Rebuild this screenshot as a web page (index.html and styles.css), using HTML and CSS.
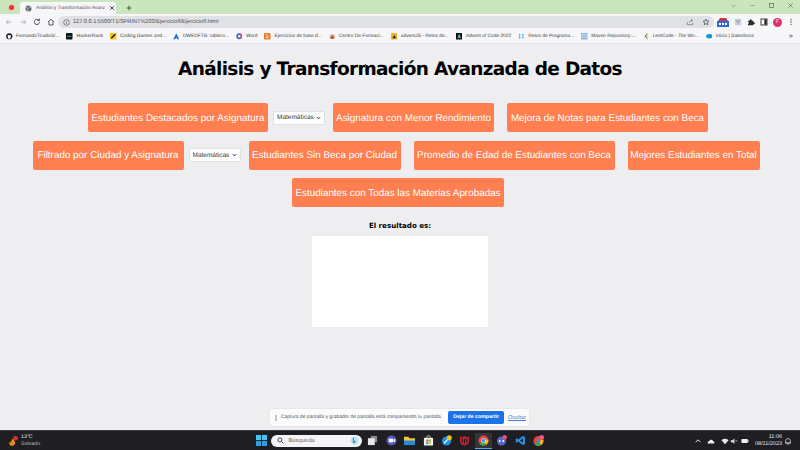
FILE: index.html
```html
<!DOCTYPE html>
<html lang="es">
<head>
<meta charset="utf-8">
<title>Análisis y Transformación Avanzada de Datos</title>
<link rel="stylesheet" href="styles.css">
</head>
<body>
<div class="browser">
  <header class="tabstrip">
    <span class="rec"></span>
    <div class="tab">
      <svg class="ic7" viewBox="0 0 16 16"><circle cx="8" cy="8" r="7" fill="#5f6368"/><path d="M2 6c3 0 4 1 5 3s-1 3-1 5M10 2c-1 2 0 3 2 3s2 3 3 3" fill="none" stroke="#fff" stroke-width="1.6"/></svg>
      <span class="tab-title">Análisis y Transformación Avanz</span>
      <svg class="tab-x" viewBox="0 0 10 10"><path d="M2 2l6 6M8 2l-6 6" stroke="#333" stroke-width="1.5"/></svg>
    </div>
    <svg class="tab-new" viewBox="0 0 10 10"><path d="M5 1v8M1 5h8" stroke="#3c5a3c" stroke-width="1.5"/></svg>
    <div class="win-controls">
      <svg viewBox="0 0 10 10"><path d="M2 4l3 3 3-3" fill="none" stroke="#7c8a78" stroke-width="1"/></svg>
      <svg viewBox="0 0 10 10"><path d="M2 5h6" stroke="#7c8a78" stroke-width="1"/></svg>
      <svg viewBox="0 0 10 10"><rect x="2" y="2" width="6" height="6" fill="none" stroke="#5d6b5a" stroke-width="1"/></svg>
      <svg viewBox="0 0 10 10"><path d="M2 2l6 6M8 2l-6 6" stroke="#5d6b5a" stroke-width="1"/></svg>
    </div>
  </header>

  <div class="toolbar">
    <div class="nav">
      <svg viewBox="0 0 12 12"><path d="M10 6H2M5.500 2.500L2 6l3.500 3.500" fill="none" stroke="#a8abb0" stroke-width="1.300"/></svg>
      <svg viewBox="0 0 12 12"><path d="M2 6h8M6.500 2.500L10 6 6.500 9.500" fill="none" stroke="#a8abb0" stroke-width="1.300"/></svg>
      <svg viewBox="0 0 12 12"><path d="M9.800 6.500A3.900 3.900 0 1 1 8.800 3.200M9.500 1v3h-3" fill="none" stroke="#3c4043" stroke-width="1.400"/></svg>
      <svg viewBox="0 0 12 12"><path d="M1.500 6L6 1.800 10.500 6M3 5.500v5h6v-5" fill="none" stroke="#3c4043" stroke-width="1.300"/></svg>
    </div>
    <div class="omnibox">
      <svg class="ic7" viewBox="0 0 12 12"><circle cx="6" cy="6" r="4.800" fill="none" stroke="#55585c" stroke-width="1.200"/><path d="M6 5.500v3M6 3.300v1" stroke="#55585c" stroke-width="1.200"/></svg>
      <span class="url">127.0.0.1:5500/T1/SPRINT%203/Ejercicio6/Ejercicio6.html</span>
      <svg class="ic8 omni-share" viewBox="0 0 12 12"><path d="M2 6v4h8V7M5 7c0-2 2-3.500 4-3.500M7.500 1.500l2.500 2-2.500 2" fill="none" stroke="#6a6d71" stroke-width="1"/></svg>
      <svg class="ic8" viewBox="0 0 12 12"><path d="M6 1.500l1.300 3 3.200.3-2.400 2.100.7 3.200L6 8.400l-2.800 1.700.7-3.200L1.500 4.800l3.200-.3z" fill="none" stroke="#45484c" stroke-width="1.100"/></svg>
    </div>
    <div class="ext">
      <svg class="ext-wide" viewBox="0 0 12 10"><rect x="0" y="4" width="12" height="6" fill="#2a6fd0"/><path d="M1 4l2-3h6l2 3" fill="#c8324a"/><rect x="2" y="6" width="2" height="2" fill="#fff"/><rect x="5" y="6" width="2" height="2" fill="#fff"/><rect x="8" y="6" width="2" height="2" fill="#fff"/></svg>
      <svg class="ic8" viewBox="0 0 10 10"><rect x="1" y="1" width="8" height="8" rx="1" fill="#c9cfe0"/><path d="M3 3l2 2 2-2M5 5v2" stroke="#7d82a8" fill="none"/></svg>
      <svg class="ic8" viewBox="0 0 12 12"><path d="M1.500 4h2.500c-.5-3 3.500-3 3 0h2.500v2.500c3-.5 3 3.500 0 3V11h-8V8.500c2 .5 2-3 0-2.500z" fill="#27292c"/></svg>
      <svg class="ic8" viewBox="0 0 12 12"><rect x="1.500" y="1.500" width="9" height="9" fill="#fff" stroke="#222" stroke-width="1.300"/><rect x="6.500" y="2" width="3.500" height="8" fill="#222"/></svg>
      <span class="avatar">F</span>
      <svg class="ic8" viewBox="0 0 12 12"><circle cx="6" cy="2.500" r="1" fill="#444"/><circle cx="6" cy="6" r="1" fill="#444"/><circle cx="6" cy="9.500" r="1" fill="#444"/></svg>
    </div>
  </div>

  <nav class="bookmarks">
    <a class="bm"><svg viewBox="0 0 10 10"><circle cx="5" cy="5" r="4.800" fill="#1b1f23"/><path d="M3.500 9V7.500C2 7 2.500 3.500 3 3.200L4 3.600h2l1-.4c.5.300 1 3.800-.5 4.300V9" fill="#fff"/></svg>FernandoTiradoG/...</a>
    <a class="bm"><svg viewBox="0 0 10 10"><rect width="10" height="10" rx="1" fill="#0e141e"/><rect x="2" y="4.500" width="6" height="1.500" fill="#2ec866"/></svg>HackerRank</a>
    <a class="bm"><svg viewBox="0 0 10 10"><rect width="10" height="10" fill="#f5c518"/><path d="M2 8l6-6" stroke="#111" stroke-width="2"/></svg>Coding Games and...</a>
    <a class="bm"><svg viewBox="0 0 10 10"><path d="M5 .5L9.500 9.500h-3L5 6.500 3.500 9.500H.5z" fill="#1f6fd6"/></svg>DWEDFTG: tablero...</a>
    <a class="bm"><svg viewBox="0 0 10 10"><circle cx="5" cy="5" r="4.500" fill="#4d55c8"/><circle cx="5" cy="5" r="2" fill="#fff"/><path d="M5 .5A4.500 4.500 0 0 1 9.500 5H7" fill="#e0505a"/></svg>Word</a>
    <a class="bm"><svg viewBox="0 0 10 10"><rect width="10" height="10" rx="2" fill="#f0761f"/><path d="M2.500 7.500h5M2.500 5h5M2.500 2.500h3" stroke="#fff"/></svg>Ejercicios de base d...</a>
    <a class="bm"><svg viewBox="0 0 10 10"><path d="M1 9V4l4-3 4 3v5z" fill="#d9a58c"/><rect x="3" y="5" width="4" height="4" fill="#b5483c"/></svg>Centro De Formaci...</a>
    <a class="bm"><svg viewBox="0 0 10 10"><rect width="10" height="10" rx="1" fill="#f0b429"/><path d="M2 8l3-5 3 5z" fill="#2b2b2b"/></svg>adventJS - Retos de...</a>
    <a class="bm"><svg viewBox="0 0 10 10"><rect width="10" height="10" fill="#0f0f23"/><path d="M5 1.500l2 3H6l2 3H2l2-3H3z" fill="#6ec06e"/></svg>Advent of Code 2022</a>
    <a class="bm"><svg viewBox="0 0 10 10"><path d="M2.500 1v8M7.500 1v8M1 3h3M6 3h3M1 7h3M6 7h3" stroke="#4a9ee0" fill="none"/></svg>Retos de Programa...</a>
    <a class="bm"><svg viewBox="0 0 10 10"><rect width="10" height="10" fill="#8fb4dc"/><path d="M0 3h10M0 6.500h10" stroke="#fff"/></svg>Maven Repository:...</a>
    <a class="bm"><svg viewBox="0 0 10 10"><path d="M7 1L3 5l4 4" fill="none" stroke="#333" stroke-width="1.300"/><path d="M4 5h4" stroke="#f39c12" stroke-width="1.300"/></svg>LeetCode - The Wo...</a>
    <a class="bm"><svg viewBox="0 0 10 10"><ellipse cx="5" cy="5" rx="4.800" ry="3.300" fill="#1098d6"/></svg>Inicio | Salesforce</a>
    <span class="bm-more">»</span>
  </nav>

  <main class="page">
    <h1 class="title">Análisis y Transformación Avanzada de Datos</h1>
    <span class="ibeam"></span>
    <section class="actions">
      <div class="row">
        <button class="btn w180">Estudiantes Destacados por Asignatura</button>
        <select class="subject"><option>Matemáticas</option></select>
        <button class="btn w161">Asignatura con Menor Rendimiento</button>
        <button class="btn w201">Mejora de Notas para Estudiantes con Beca</button>
      </div>
      <div class="row row-wide">
        <button class="btn w151">Filtrado por Ciudad y Asignatura</button>
        <select class="subject"><option>Matemáticas</option></select>
        <button class="btn w152">Estudiantes Sin Beca por Ciudad</button>
        <button class="btn w201">Promedio de Edad de Estudiantes con Beca</button>
        <button class="btn w132">Mejores Estudiantes en Total</button>
      </div>
      <div class="row">
        <button class="btn w212">Estudiantes con Todas las Materias Aprobadas</button>
      </div>
    </section>
    <p class="result-label">El resultado es:</p>
    <div class="result"></div>
    <div class="share-bar">
      <span class="grip"></span>
      <span class="share-text">Captura de pantalla y grabador de pantalla está compartiendo tu pantalla.</span>
      <span class="share-stop">Dejar de compartir</span>
      <span class="share-hide">Ocultar</span>
    </div>
  </main>

  <footer class="taskbar">
    <div class="weather">
      <svg class="w-icon" viewBox="0 0 14 14"><path d="M5 13C2 13 1 10 2.500 7.500 3 9 4 9 4.500 8 4 6 5 4.500 6.500 4c0 2 3 3 2.500 6-.3 2-2 3-4 3z" fill="#f59a16"/><path d="M4 12l3-4" stroke="#d8432a"/><circle cx="9.500" cy="3.500" r="3" fill="#d8342a"/></svg>
      <div class="w-text"><span>13°C</span><span class="w-sub">Soleado</span></div>
    </div>
    <div class="dock">
      <svg class="di" viewBox="0 0 12 12"><rect x="0" y="0" width="5.500" height="5.500" fill="#4cc2f0"/><rect x="6.500" y="0" width="5.500" height="5.500" fill="#4cc2f0"/><rect x="0" y="6.500" width="5.500" height="5.500" fill="#2f9fe0"/><rect x="6.500" y="6.500" width="5.500" height="5.500" fill="#2f9fe0"/></svg>
      <div class="search">
        <svg class="ic7" viewBox="0 0 12 12"><circle cx="5" cy="5" r="3.500" fill="none" stroke="#222" stroke-width="1.400"/><path d="M8 8l3 3" stroke="#222" stroke-width="1.400"/></svg>
        <span class="search-text">Búsqueda</span>
        <svg class="search-b" viewBox="0 0 12 12"><circle cx="6" cy="6" r="5.500" fill="#bfe3f7"/><path d="M4.500 2.500v6.500l3-1.500-2-1" fill="none" stroke="#1c7fd0" stroke-width="1.300"/></svg>
      </div>
      <svg class="di" viewBox="0 0 12 12"><rect x="4" y="1" width="7" height="7" fill="#8a8a8a"/><rect x="1" y="3.500" width="7.500" height="7.500" fill="#e6e6e6"/></svg>
      <svg class="di" viewBox="0 0 12 12"><circle cx="6" cy="6" r="5.500" fill="#5558c8"/><rect x="3" y="4" width="4.500" height="4" fill="#fff"/><path d="M8 5l2-1v4l-2-1z" fill="#fff"/></svg>
      <svg class="di" viewBox="0 0 12 12"><path d="M0 2h5l1 1.500h6V11H0z" fill="#f5c542"/><rect x="0" y="6" width="12" height="5" fill="#2a8ad6"/></svg>
      <svg class="di" viewBox="0 0 12 12"><path d="M4 3c0-3 4-3 4 0" fill="none" stroke="#ddd"/><rect x="1" y="3" width="10" height="8.500" rx="1" fill="#f4f4f4"/><rect x="3.500" y="5" width="2.300" height="2.300" fill="#e8532a"/><rect x="6.300" y="5" width="2.300" height="2.300" fill="#76b82a"/><rect x="3.500" y="7.700" width="2.300" height="2.300" fill="#2a9be0"/><rect x="6.300" y="7.700" width="2.300" height="2.300" fill="#f5c518"/></svg>
      <svg class="di" viewBox="0 0 12 12"><circle cx="6" cy="6.500" r="5" fill="#1f8fe0"/><path d="M3.500 9L8 4" stroke="#fff" stroke-width="1.300"/><circle cx="9" cy="3" r="2.800" fill="#f5c518"/></svg>
      <svg class="di" viewBox="0 0 12 12"><path d="M1 1.500l2.500 1L6 1l2.500 1.500L11 1.500V7c0 2.500-3 4-5 4.500C4 11 1 9.500 1 7z" fill="#c0202a"/><path d="M3.500 4v4M6 4v5M8.500 4v4" stroke="#1d1d20" stroke-width="1.200"/></svg>
      <span class="di-active"><svg class="di" viewBox="0 0 12 12"><circle cx="6" cy="6" r="5.500" fill="#e5453a"/><path d="M6 6L1.500 9.500A5.500 5.500 0 0 0 9 10.700z" fill="#34a853"/><path d="M6 6l5 -1.500a5.500 5.500 0 0 1-2 6.200z" fill="#fbbc05"/><circle cx="6" cy="6" r="2.500" fill="#fff"/><circle cx="6" cy="6" r="1.800" fill="#4285f4"/></svg></span>
      <svg class="di" viewBox="0 0 12 12"><circle cx="6" cy="6.500" r="5" fill="#5865c8"/><circle cx="4" cy="6.500" r="1" fill="#fff"/><circle cx="8" cy="6.500" r="1" fill="#fff"/><circle cx="9.500" cy="2.500" r="2.500" fill="#e0506a"/></svg>
      <svg class="di" viewBox="0 0 12 12"><path d="M8.500 1L11 2.200v7.600L8.500 11 3.500 7 1.500 8.500.8 8V4l.7-.5L3.500 5z" fill="#2a8fe0"/><path d="M8.500 3.500L5.500 6l3 2.500z" fill="#1d1d20"/></svg>
      <svg class="di" viewBox="0 0 12 12"><circle cx="6" cy="6.500" r="5.500" fill="#e5453a"/><path d="M6 6.500L1.500 10A5.500 5.500 0 0 0 9 11z" fill="#34a853"/><path d="M6 6.500l5-1.500a5.500 5.500 0 0 1-2 6z" fill="#fbbc05"/><circle cx="6" cy="6.500" r="2" fill="#4285f4"/><circle cx="9.500" cy="2.500" r="2.500" fill="#ef5a8a"/></svg>
    </div>
    <div class="tray">
      <svg class="ti" viewBox="0 0 10 10"><path d="M2 6.500L5 3.500l3 3" fill="none" stroke="#eee" stroke-width="1.200"/></svg>
      <svg class="ti t-cloud" viewBox="0 0 10 10"><path d="M1 8c-.5-2 .5-3 2-3 .5-2 3.500-2 4.500 0C9 5 9.500 7 9 8z" fill="#eee"/></svg>
      <svg class="ti t-wifi" viewBox="0 0 10 10"><path d="M.5 4a6.500 6.500 0 0 1 9 0L5 9z" fill="#e4e4e4"/></svg>
      <svg class="ti t-sound" viewBox="0 0 10 10"><path d="M1 4h2l2.500-2v6.500L3 6.500H1z" fill="#ddd"/><path d="M7 4l2 2M9 4L7 6" stroke="#bbb" stroke-width=".8"/></svg>
      <svg class="ti t-batt" viewBox="0 0 10 10"><rect x=".5" y="2.500" width="8" height="5" rx="1" fill="#eee"/><rect x="9" y="4" width="1" height="2" fill="#ccc"/></svg>
      <div class="clock"><span>11:06</span><span>08/11/2023</span></div>
      <svg class="ti bell" viewBox="0 0 10 10"><path d="M2 7.500V5a3 3 0 0 1 6 0v2.500zM1.500 7.500h7M4 9h2" fill="none" stroke="#ddd" stroke-width=".9"/></svg>
    </div>
  </footer>
</div>
</body>
</html>
```

FILE: styles.css
```css
* { box-sizing: border-box; }
html, body { margin: 0; height: 100%; overflow: hidden; }
body { font-family: "Liberation Sans", Arial, sans-serif; background: #eeeef0; text-rendering: geometricPrecision; }
svg { display: block; flex: none; }
.ic7 { width: 7px; height: 7px; }
.ic8 { width: 8px; height: 8px; }

.browser { display: flex; flex-direction: column; height: 450px; }

/* tab strip */
.tabstrip { height: 14px; background: #c9e6bd; display: flex; align-items: flex-end; padding-left: 9px; flex: none; }
.rec { width: 5px; height: 5px; border-radius: 50%; background: #e5343c; box-shadow: 0 0 0 1px #eec4a8; align-self: center; margin-right: 6px; margin-top: 1px; }
.tab { width: 96px; height: 12px; background: #f6f6f8; border-radius: 3px 3px 0 0; display: flex; align-items: center; padding: 0 5px; gap: 4px; }
.tab-title { font-size: 4.800px; color: #45484c; white-space: nowrap; flex: 1; }
.tab-x { width: 6px; height: 6px; flex: none; }
.tab-new { width: 6px; height: 6px; margin: 0 0 3px 10px; }
.win-controls { margin-left: auto; display: flex; gap: 12px; padding: 0 6px 3px 0; align-self: center; }
.win-controls svg { width: 7px; height: 7px; }

/* toolbar */
.toolbar { height: 16px; background: #f7f7f9; display: flex; align-items: center; flex: none; padding: 0 5px; }
.nav { display: flex; gap: 6px; width: 53px; }
.nav svg { width: 8px; height: 8px; }
.omnibox { width: 657px; height: 12px; background: #dfe1e5; border-radius: 6px; display: flex; align-items: center; padding: 0 4px 0 5px; gap: 3px; }
.url { font-size: 5.600px; color: #4c4f54; flex: 1; white-space: nowrap; }
.omni-share { margin-right: 5px; }
.ext { display: flex; align-items: center; gap: 5px; margin-left: 3px; }
.ext-wide { width: 12px; height: 10px; }
.avatar { width: 9px; height: 9px; border-radius: 50%; background: #e0306a; color: #fff; font-size: 5px; line-height: 9px; text-align: center; }

/* bookmarks */
.bookmarks { height: 14px; background: #f7f7f9; display: flex; align-items: center; padding: 0 7px 0 6px; flex: none; border-bottom: 1px solid #e4e4e6; }
.bm { display: flex; align-items: center; gap: 3.500px; font-size: 4.850px; color: #3a3c40; white-space: nowrap; margin-right: 7px; }
.bm svg { width: 6.500px; height: 6.500px; }
.bm-more { margin-left: auto; font-size: 7px; color: #333; }

/* page */
.page { position: relative; flex: 1; display: flex; flex-direction: column; align-items: center; background: #eeeef0; }
.title { margin: 15px 0 0; height: 22px; font-family: "Comic Sans MS", "DejaVu Sans", sans-serif; font-size: 18.500px; letter-spacing: -.68px; line-height: 22px; font-weight: 700; color: #000; white-space: nowrap; }
.ibeam { position: absolute; left: 365px; top: 20px; width: 1px; height: 9px; background: #555; }
.actions { margin-top: 22px; display: flex; flex-direction: column; gap: 8.500px; align-items: center; }
.row { display: flex; justify-content: center; align-items: center; gap: 13px; white-space: nowrap; padding-right: 4px; }
.row-wide { padding-right: 8px; }
.btn { height: 29px; padding: 1px 0 0; border: 0; border-radius: 2px; background: #ff7f50; color: #fff; font-family: "Liberation Sans", Arial, sans-serif; font-size: 9.900px; white-space: nowrap; text-rendering: geometricPrecision; }
.w132 { width: 132px; }
.w151 { width: 151px; }
.w152 { width: 152px; }
.w161 { width: 161px; }
.w180 { width: 180px; }
.w201 { width: 201px; }
.w212 { width: 212px; }
.subject { width: 52px; height: 14px; margin: 0 -5px 0 -8px; padding: 0 0 0 3px; border: 1px solid #e2e2e4; border-radius: 2px; color: #333; font-family: "Liberation Sans", Arial, sans-serif; font-size: 6.500px; text-rendering: geometricPrecision; appearance: none; background: #fff url("data:image/svg+xml,%3Csvg xmlns='http://www.w3.org/2000/svg' viewBox='0 0 6 4'%3E%3Cpath d='M1 1l2 2 2-2' fill='none' stroke='%23222' stroke-width='1.200'/%3E%3C/svg%3E") no-repeat right 3px center / 5px 4px; }
.result-label { margin: 14px 0 0; font-family: "Comic Sans MS", "DejaVu Sans", sans-serif; font-size: 7.100px; line-height: 10px; font-weight: 700; color: #000; }
.result { width: 176px; height: 91px; margin-top: 5px; background: #fff; border-radius: 2px; }
.share-bar { position: absolute; left: 270px; top: 365px; width: 259px; height: 17px; background: #fbfbfc; box-shadow: 0 0 2px #d8d8dc; border-radius: 2px; display: flex; align-items: center; padding: 0 3px 0 5px; }
.grip { width: 2px; height: 6px; background: #c4c6ca; margin-right: 4px; }
.share-text { font-size: 4.950px; color: #50535a; white-space: nowrap; width: 168px; }
.share-stop { width: 56px; height: 13px; background: #1a73e8; border-radius: 2px; color: #fff; font-size: 5.200px; font-weight: 700; line-height: 13px; text-align: center; }
.share-hide { margin-left: 4px; font-size: 5.600px; color: #4a7fd8; text-decoration: underline; }

/* taskbar */
.taskbar { height: 20px; background: #1f1f23; border-top: 1px solid #3c3c40; display: grid; grid-template-columns: 1fr auto 1fr; align-items: center; flex: none; color: #e8e8e8; }
.weather { display: flex; align-items: center; gap: 2px; padding-left: 8px; }
.w-icon { width: 11px; height: 12px; }
.w-text { display: flex; flex-direction: column; font-size: 5.200px; line-height: 7px; }
.w-sub { color: #b8b8b8; }
.dock { display: flex; align-items: center; gap: 7.400px; }
.di { width: 11px; height: 11px; }
.di-active { background: #333338; padding: 2px 3px; margin: 0 -3px; border-bottom: 1px solid #5aa8e8; }
.search { width: 91px; height: 12px; margin: 0 -2.400px 0 -2.900px; border-radius: 6px; background: #f4f4f6; display: flex; align-items: center; padding: 0 3px 0 6px; gap: 4px; }
.search-text { flex: 1; color: #66686c; font-size: 5.800px; }
.search-b { width: 9px; height: 9px; }
.tray { justify-self: end; display: flex; align-items: center; padding-right: 8px; }
.ti { width: 8px; height: 8px; }
.t-cloud { margin-left: 5px; }
.t-wifi { margin-left: 6px; }
.t-sound { margin-left: 1px; }
.t-batt { margin-left: 3px; }
.clock { display: flex; flex-direction: column; align-items: flex-end; font-size: 5.500px; line-height: 7px; margin-left: 6px; color: #e4e4e4; }
.bell { margin-left: 2px; }
```
